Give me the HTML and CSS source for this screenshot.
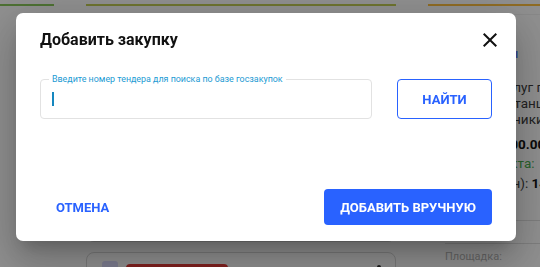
FILE: index.html
```html
<!DOCTYPE html>
<html lang="ru">
<head>
<meta charset="utf-8">
<title>Добавить закупку</title>
<link rel="stylesheet" href="styles.css">
</head>
<body>
<div class="page">
  <div class="col col-left">
    <div class="bar bar-green"></div>
  </div>
  <div class="col col-mid">
    <div class="bar bar-lime"></div>
    <div class="card card-tall"></div>
    <div class="card card-item">
      <span class="item-icon"></span>
      <span class="item-tag"></span>
      <span class="item-dot"></span>
    </div>
  </div>
  <div class="col col-right">
    <div class="bar bar-amber"></div>
    <div class="rp-top"></div>
    <div class="rp-body">
      <div class="rp-link">Документы</div>
      <div class="rp-text">Закупка услуг по</div>
      <div class="rp-text">в электростанции и</div>
      <div class="rp-text">все сотрудники</div>
      <div class="rp-price">Цена: <b>30 000.00</b></div>
      <div class="rp-green">До контракта:</div>
      <div class="rp-term">Монтаж (дн): <b>14</b></div>
      <div class="rp-sep rp-sep-first"></div>
      <div class="rp-sep rp-sep-second"></div>
      <div class="rp-muted">Площадка:</div>
    </div>
  </div>
</div>

<div class="backdrop"></div>

<div class="dialog-layer">
  <div class="dialog" role="dialog" aria-labelledby="dlg-title">
    <div class="dialog-head">
      <h2 class="dialog-title" id="dlg-title">Добавить закупку</h2>
      <button class="icon-btn" aria-label="Закрыть">
        <svg viewBox="0 0 24 24" width="24" height="24"><path d="M19 6.41L17.59 5 12 10.59 6.41 5 5 6.41 10.59 12 5 17.59 6.41 19 12 13.41 17.59 19 19 17.59 13.41 12z" fill="#111"/></svg>
      </button>
    </div>
    <div class="search-row">
      <div class="field">
        <label class="field-label" for="tender">Введите номер тендера для поиска по базе госзакупок</label>
        <input class="field-input" id="tender" type="text">
        <span class="caret"></span>
      </div>
      <button class="btn btn-outline">Найти</button>
    </div>
    <div class="dialog-actions">
      <button class="btn btn-text">Отмена</button>
      <button class="btn btn-primary">Добавить вручную</button>
    </div>
  </div>
</div>
</body>
</html>
```
FILE: styles.css
```css
* { box-sizing: border-box; }

html, body {
  margin: 0;
  padding: 0;
  width: 540px;
  height: 267px;
  overflow: hidden;
  background: #fff;
  font-family: Roboto, "Liberation Sans", sans-serif;
}

/* ---------- background page ---------- */
.page {
  display: flex;
  gap: 32px;
  width: 540px;
  height: 267px;
  overflow: hidden;
}

.col { flex: none; }
.col-left { width: 54px; }
.col-mid { width: 310px; }
.col-right { flex: 1; min-width: 0; overflow: hidden; }

.bar { height: 2px; margin-top: 4px; }
.bar-green { background: #8ac95c; }
.bar-lime { background: #c4cf55; }
.bar-amber { background: #ffc040; }

.card {
  border: 1px solid #d8d8d8;
  border-radius: 8px;
  background: #fff;
}
.card-tall { margin-top: 8px; height: 228px; }
.card-item {
  margin-top: 10px;
  height: 60px;
  display: flex;
  align-items: flex-start;
  gap: 8px;
  padding: 8px 14px 0 15px;
}
.item-icon {
  width: 16px;
  height: 16px;
  border-radius: 3px;
  background: #dcdcff;
}
.item-tag {
  width: 102px;
  height: 16px;
  margin-top: 3px;
  border-radius: 4px;
  background: #e53935;
}
.item-dot {
  margin-left: auto;
  margin-top: 4px;
  width: 4px;
  height: 4px;
  border-radius: 50%;
  background: #333;
}

.rp-top { height: 9px; border-bottom: 1px solid #f2f2f2; }
.rp-body {
  padding-left: 17px;
  white-space: nowrap;
  font-size: 13.5px;
  line-height: 16px;
  color: #3c3c3c;
}
.rp-link { margin-top: 30px; color: #2962ff; }
.rp-link + .rp-text { margin-top: 18px; }
.rp-price { margin-top: 9px; }
.rp-price b, .rp-term b { color: #111; font-weight: 700; }
.rp-green { margin-top: 3px; color: #4caf50; }
.rp-term { margin-top: 4px; }
.rp-sep { border-top: 1px solid #e0e0e0; }
.rp-sep-first { margin-top: 29px; }
.rp-sep-second { margin-top: 22px; }
.rp-muted { margin-top: 6px; font-size: 11px; line-height: 13px; color: #b4b4b4; }

/* ---------- overlay ---------- */
.backdrop {
  position: fixed;
  inset: 0;
  background: rgba(0, 0, 0, 0.44);
}

.dialog-layer {
  position: fixed;
  inset: 0;
  padding: 13px 0 0 16px;
}

.dialog {
  width: 500px;
  background: #fff;
  border-radius: 7px;
  padding: 15px 24px 16px;
  box-shadow:
    0 11px 15px -7px rgba(0, 0, 0, 0.2),
    0 24px 38px 3px rgba(0, 0, 0, 0.14),
    0 9px 46px 8px rgba(0, 0, 0, 0.12);
}

.dialog-head {
  display: flex;
  align-items: center;
  justify-content: space-between;
  height: 24px;
}
.dialog-title {
  margin: 0;
  font-size: 16px;
  line-height: 24px;
  font-weight: 700;
  color: #111;
}
.icon-btn {
  width: 24px;
  height: 24px;
  padding: 0;
  margin-right: -10px;
  border: none;
  background: none;
  display: flex;
}

.search-row {
  margin-top: 27px;
  display: flex;
  gap: 25px;
  height: 40px;
}

.field {
  position: relative;
  flex: 1;
  height: 40px;
  border: 1px solid #e2e2e2;
  border-radius: 4px;
}
.field-label {
  position: absolute;
  top: -7px;
  left: 8px;
  padding: 0 3px;
  background: #fff;
  font-size: 8.9px;
  line-height: 12px;
  color: #1b9ad3;
  white-space: nowrap;
}
.field-input {
  width: 100%;
  height: 100%;
  border: none;
  outline: none;
  background: transparent;
  padding: 0 11px;
  font: inherit;
  font-size: 14px;
}
.caret {
  position: absolute;
  left: 11px;
  top: 12px;
  width: 1.5px;
  height: 14px;
  background: #1587bf;
}

.btn {
  font-family: Roboto, "Liberation Sans", sans-serif;
  font-size: 13px;
  font-weight: 700;
  text-transform: uppercase;
  border-radius: 4px;
  cursor: pointer;
}
.btn-outline {
  width: 95px;
  height: 40px;
  border: 1px solid #2962ff;
  background: #fff;
  color: #2962ff;
}

.dialog-actions {
  margin-top: 70px;
  display: flex;
  align-items: center;
  justify-content: space-between;
}
.btn-text {
  height: 36px;
  padding: 0 16px;
  border: none;
  background: none;
  color: #2962ff;
}
.btn-primary {
  height: 36px;
  padding: 0 16px;
  border: none;
  background: #2962ff;
  color: #fff;
}
```
